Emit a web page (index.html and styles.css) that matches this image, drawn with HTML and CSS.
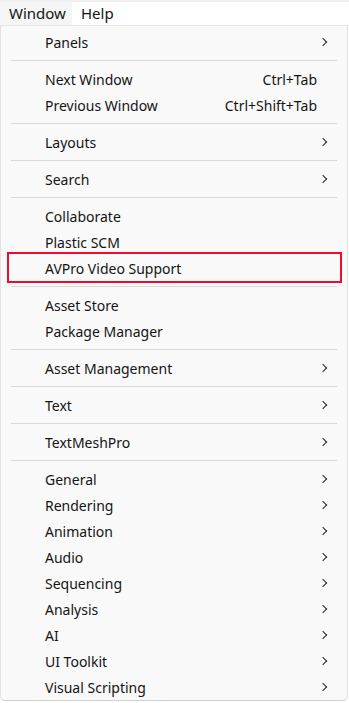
FILE: index.html
```html
<!DOCTYPE html>
<html><head>
<title>Window menu</title>
<link rel="stylesheet" href="styles.css">
</head><body>

<div class="menubar">
  <div class="menubar-item open">Window</div>
  <div class="menubar-item">Help</div>
</div>

<div class="menu">
  <div class="item sub">Panels</div>
  <div class="sep"></div>
  <div class="item"><span>Next Window</span><span class="key">Ctrl+Tab</span></div>
  <div class="item"><span>Previous Window</span><span class="key">Ctrl+Shift+Tab</span></div>
  <div class="sep"></div>
  <div class="item sub">Layouts</div>
  <div class="sep"></div>
  <div class="item sub">Search</div>
  <div class="sep"></div>
  <div class="item">Collaborate</div>
  <div class="item">Plastic SCM</div>
  <div class="item marked">AVPro Video Support</div>
  <div class="sep"></div>
  <div class="item">Asset Store</div>
  <div class="item">Package Manager</div>
  <div class="sep"></div>
  <div class="item sub">Asset Management</div>
  <div class="sep"></div>
  <div class="item sub">Text</div>
  <div class="sep"></div>
  <div class="item sub">TextMeshPro</div>
  <div class="sep"></div>
  <div class="item sub">General</div>
  <div class="item sub">Rendering</div>
  <div class="item sub">Animation</div>
  <div class="item sub">Audio</div>
  <div class="item sub">Sequencing</div>
  <div class="item sub">Analysis</div>
  <div class="item sub">AI</div>
  <div class="item sub">UI Toolkit</div>
  <div class="item sub">Visual Scripting</div>
</div>

</body></html>
```

FILE: styles.css
```css
html, body {
  margin: 0;
  padding: 0;
  background: #fff;
  font-family: "Noto Sans", "Open Sans", sans-serif;
  font-size: 14px;
  color: #141414;
  }
.menubar {
  display: flex;
  height: 23px;
  border-top: 2px solid #f0f0f0;
  border-bottom: 1px solid #e6e6e6;
  }
.menubar-item {
  padding: 0 9px;
  line-height: 23px;
  font-size: 15px;
  }
.menubar-item.open {
  background: #f5f5f5;
  width: 54px;
  }
.menu {
  width: 346px;
  background: #f9f9f9;
  border-left: 1px solid #e2e2e2;
  border-right: 1px solid #e0e0e0;
  border-bottom: 1px solid #d0d0d0;
  border-radius: 0 0 5px 5px;
  padding: 3px 0 0;
  }
.item {
  position: relative;
  display: flex;
  justify-content: space-between;
  align-items: center;
  height: 26px;
  padding: 0 30px 0 44px;
  }
.sub::after {
  content: "";
  position: absolute;
  right: 21px;
  top: 10px;
  width: 5px;
  height: 5px;
  border-top: 1.5px solid #222;
  border-right: 1.5px solid #222;
  transform: rotate(45deg);
  }
.marked::before {
  content: "";
  position: absolute;
  left: 6px;
  right: 5px;
  top: -3px;
  bottom: -2px;
  border: 2px solid #f00a2c;
  }
.sep {
  height: 1px;
  margin: 5px 10px 5px 10px;
  background: #d9d9d9;
  }
```
